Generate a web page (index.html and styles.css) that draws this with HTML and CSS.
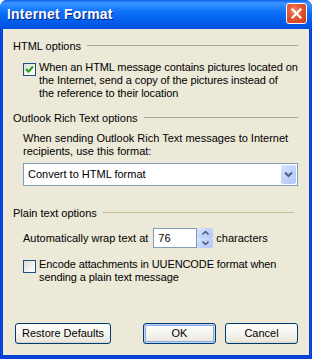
FILE: index.html
```html
<!DOCTYPE html>
<html lang="en">
<head>
    <meta charset="UTF-8">
    <title>Internet Format</title>
    <link rel="stylesheet" href="styles.css">
</head>
<body>
    <div class="window">
        <div class="title-bar">
            <span class="title">Internet Format</span>
            <span class="close-btn">
                <svg width="11" height="11" viewBox="0 0 11 11"><path d="M1.5 1.5 L9.5 9.5 M9.5 1.5 L1.5 9.5" stroke="#fff" stroke-width="2.2" stroke-linecap="square"/></svg>
            </span>
        </div>

        <div class="content">
            <!-- HTML options -->
            <div class="group-head first">
                <span>HTML options</span>
                <span class="rule"></span>
            </div>
            <div class="check-row first-check">
                <span class="checkbox checked">
                    <svg width="9" height="9" viewBox="0 0 9 9"><path d="M1 4 L3.5 6.5 L8 1.5" fill="none" stroke="#21a121" stroke-width="2"/></svg>
                </span>
                <span class="check-text">When an HTML message contains pictures located on<br>the Internet, send a copy of the pictures instead of<br>the reference to their location</span>
            </div>

            <!-- Outlook Rich Text options -->
            <div class="group-head second">
                <span>Outlook Rich Text options</span>
                <span class="rule"></span>
            </div>
            <p class="indent-text">When sending Outlook Rich Text messages to Internet<br>recipients, use this format:</p>
            <div class="select">
                <span class="select-value">Convert to HTML format</span>
                <span class="select-btn">
                    <svg width="9" height="7" viewBox="0 0 9 7"><path d="M1 1.5 L4.5 5 L8 1.5" fill="none" stroke="#4d6185" stroke-width="2"/></svg>
                </span>
            </div>

            <!-- Plain text options -->
            <div class="group-head third">
                <span>Plain text options</span>
                <span class="rule olive"></span>
            </div>
            <div class="wrap-row">
                <span>Automatically wrap text at</span>
                <span class="num-input">76</span>
                <span class="spin">
                    <span class="spin-half"><svg width="7" height="4" viewBox="0 0 7 4"><path d="M0.5 3.5 L3.5 0.5 L6.5 3.5" fill="none" stroke="#4d6185" stroke-width="1.6"/></svg></span>
                    <span class="spin-half"><svg width="7" height="4" viewBox="0 0 7 4"><path d="M0.5 0.5 L3.5 3.5 L6.5 0.5" fill="none" stroke="#4d6185" stroke-width="1.6"/></svg></span>
                </span>
                <span>characters</span>
            </div>
            <div class="check-row second-check">
                <span class="checkbox"></span>
                <span class="check-text">Encode attachments in UUENCODE format when<br>sending a plain text message</span>
            </div>

            <div class="buttons">
                <span class="button restore">Restore Defaults</span>
                <span class="spacer"></span>
                <span class="button default">OK</span>
                <span class="button">Cancel</span>
            </div>
        </div>
    </div>
</body>
</html>
```

FILE: styles.css
```css
body {
    margin: 0;
    font-family: "Liberation Sans", Arial, sans-serif;
    font-size: 11px;
    color: #000;
}

.window {
    width: 312px;
    height: 359px;
    box-sizing: border-box;
    display: flex;
    flex-direction: column;
    background-color: #0842d8;
    border-radius: 7px 7px 0 0;
    overflow: hidden;
}

.title-bar {
    height: 29px;
    flex: none;
    display: flex;
    align-items: center;
    padding: 0 5px 0 7px;
    background: linear-gradient(#0a5fe6 0%, #3d95ff 10%, #2a8aff 20%, #0f73fa 40%, #0566f2 60%, #0058e6 85%, #0350dc 100%);
}

.title {
    flex: 1;
    color: #fff;
    font-weight: bold;
    font-size: 14px;
    letter-spacing: 0.2px;
    text-shadow: 1px 1px 0 #0a1d80;
    margin-top: -1px;
}

.close-btn {
    width: 19px;
    height: 19px;
    border: 1px solid #fff;
    border-radius: 3px;
    background: radial-gradient(circle at 40% 35%, #f08a6a 0%, #e2542e 45%, #c73d1a 100%);
    display: flex;
    align-items: center;
    justify-content: center;
    margin-top: -2px;
}

.content {
    flex: 1;
    margin: 0 3px 4px 3px;
    background-color: #ece9d8;
    padding: 0 11px 0 10px;
    display: flex;
    flex-direction: column;
    line-height: 13px;
}

.group-head {
    display: flex;
    align-items: center;
}

.group-head.first {
    margin-top: 11px;
}

.group-head.second {
    margin-top: 12px;
}

.group-head.third {
    margin-top: 21px;
}

.rule {
    flex: 1;
    height: 1px;
    background-color: #a7a69a;
    margin: -2px 0 0 6px;
}

.rule.olive {
    background-color: #c2c195;
    margin-right: 4px;
}

.check-row {
    display: flex;
    align-items: flex-start;
    padding-left: 10px;
}

.first-check {
    margin-top: 8px;
}

.second-check {
    margin-top: 10px;
}

.checkbox {
    flex: none;
    width: 11px;
    height: 11px;
    border: 1px solid #1c5180;
    background: linear-gradient(135deg, #dcdcd6 0%, #f4f4f0 60%, #ffffff 100%);
    margin: 2px 3px 0 0;
    display: flex;
    align-items: center;
    justify-content: center;
}

.check-text {
    flex: 1;
    white-space: nowrap;
    letter-spacing: -0.1px;
}

.indent-text {
    margin: 7px 0 0 10px;
    white-space: nowrap;
}

.select {
    margin: 5px 0 0 10px;
    height: 21px;
    border: 1px solid #7f9db9;
    background-color: #fff;
    display: flex;
    align-items: center;
}

.select-value {
    flex: 1;
    padding-left: 4px;
}

.select-btn {
    width: 15px;
    height: 19px;
    margin-right: 1px;
    background: linear-gradient(135deg, #dbe5fd 0%, #c1d3fb 50%, #b3c8f8 100%);
    border-radius: 2px;
    display: flex;
    align-items: center;
    justify-content: center;
}

.wrap-row {
    margin: 8px 0 0 10px;
    display: flex;
    align-items: center;
}

.num-input {
    width: 38px;
    height: 18px;
    margin-left: 5px;
    border: 1px solid #7f9db9;
    background-color: #fff;
    padding-left: 4px;
    box-sizing: content-box;
    line-height: 18px;
}

.spin {
    width: 16px;
    height: 20px;
    display: flex;
    flex-direction: column;
    margin-right: 3px;
}

.spin-half {
    flex: 1;
    background: linear-gradient(135deg, #dbe5fd 0%, #c1d3fb 50%, #b3c8f8 100%);
    border-radius: 2px;
    display: flex;
    align-items: center;
    justify-content: center;
}

.buttons {
    margin-top: auto;
    margin-bottom: 11px;
    display: flex;
    align-items: center;
    gap: 9px;
    padding-left: 2px;
}

.spacer {
    flex: 1;
}

.button {
    height: 21px;
    width: 73px;
    box-sizing: border-box;
    border: 1px solid #003c74;
    border-radius: 3px;
    background: linear-gradient(#ffffff 0%, #f5f4ee 50%, #ebe8dc 90%, #d6d0c5 100%);
    display: flex;
    align-items: center;
    justify-content: center;
}

.button.restore {
    width: 96px;
}

.button.default {
    box-shadow: inset 0 0 0 1px #bcd4f6, inset 0 0 0 2px #89ade4;
}
```
